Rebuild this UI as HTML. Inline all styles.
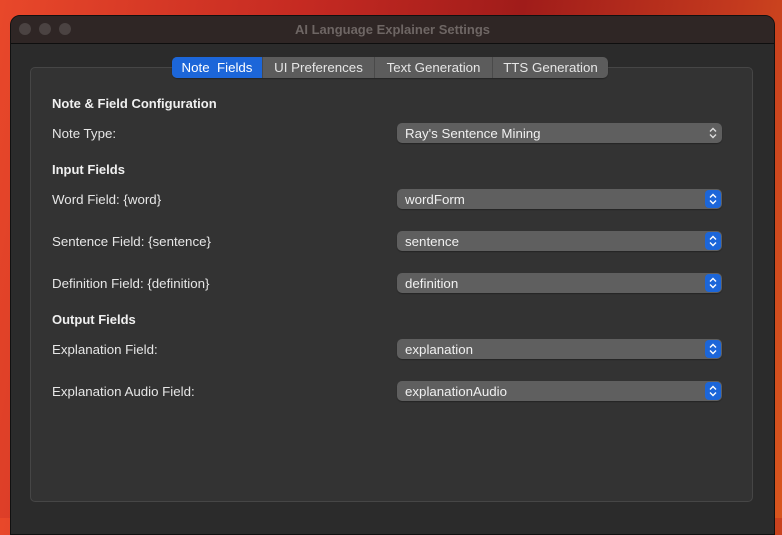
<!DOCTYPE html>
<html><head><style>
*{margin:0;padding:0;box-sizing:border-box}
body{width:782px;height:518px;overflow:hidden;position:relative;font-family:"Liberation Sans",sans-serif;
background:linear-gradient(100deg,#e8482a 0%,#c52a22 35%,#a01c1a 60%,#c43a1e 85%,#d8561e 100%)}
.win{position:absolute;left:10px;top:15px;width:765px;height:520px;background:#2b2b2b;border-radius:10px 10px 0 0;border:1px solid #111;overflow:hidden}
.tb{height:28px;background:#2f2625;border-bottom:1px solid #0e0e0e;position:relative}
.dot{position:absolute;top:7px;width:12px;height:12px;border-radius:50%;background:#4b4342}
.title{position:absolute;left:0;right:0;top:6px;text-align:center;color:#6e6664;font-weight:bold;font-size:13px}
.group{position:absolute;left:30px;top:67px;width:723px;height:435px;background:#333;border:1px solid #464646;border-radius:5px}
.tabs{position:absolute;left:172px;top:57px;height:21px;display:flex;border-radius:5px;overflow:hidden;background:#5c5c5c;box-shadow:0 1px 1px rgba(0,0,0,.3)}
.tab{color:#e6e6e6;font-size:13.3px;line-height:21px;text-align:center;border-right:1px solid #4a4a4a}
.tab.on{background:#1c66d9;color:#fff}
.h{position:absolute;left:52px;color:#f0f0f0;font-weight:bold;font-size:13px}
.l{position:absolute;left:52px;color:#e6e6e6;font-size:13.3px}
.pop{position:absolute;left:397px;width:325px;height:20px;background:#5f5f5f;border-radius:5px;color:#f0f0f0;font-size:13.3px;line-height:21px;padding-left:8px;box-shadow:0 1px 1px rgba(0,0,0,.3)}
.ar{position:absolute;right:1px;top:1px;width:16px;height:18px;border-radius:4px}
.ar.b{background:#1c66d9}
.ar svg{position:absolute;left:4px;top:3px}
</style></head><body>
<div class="win">
<div class="tb"><div class="dot" style="left:8px"></div><div class="dot" style="left:28px"></div><div class="dot" style="left:48px"></div>
<div class="title">AI Language Explainer Settings</div></div>
</div>
<div class="group"></div>
<div class="tabs">
<div class="tab on" style="width:91px">Note&nbsp; Fields</div>
<div class="tab" style="width:112px">UI Preferences</div>
<div class="tab" style="width:118px">Text Generation</div>
<div class="tab" style="width:115px;border:none">TTS Generation</div>
</div>
<div class="h" style="top:96px">Note &amp; Field Configuration</div>
<div class="l" style="top:126px">Note Type:</div>
<div class="pop" style="top:123px">Ray's Sentence Mining<div class="ar"><svg width="8" height="12"><path d="M1 4.5L4 1.5L7 4.5M1 7.5L4 10.5L7 7.5" stroke="#ddd" stroke-width="1.4" fill="none"/></svg></div></div>
<div class="h" style="top:162px">Input Fields</div>
<div class="l" style="top:192px">Word Field: {word}</div>
<div class="pop" style="top:189px">wordForm<div class="ar b"><svg width="8" height="12"><path d="M1 4.5L4 1.5L7 4.5M1 7.5L4 10.5L7 7.5" stroke="#fff" stroke-width="1.4" fill="none"/></svg></div></div>
<div class="l" style="top:234px">Sentence Field: {sentence}</div>
<div class="pop" style="top:231px">sentence<div class="ar b"><svg width="8" height="12"><path d="M1 4.5L4 1.5L7 4.5M1 7.5L4 10.5L7 7.5" stroke="#fff" stroke-width="1.4" fill="none"/></svg></div></div>
<div class="l" style="top:276px">Definition Field: {definition}</div>
<div class="pop" style="top:273px">definition<div class="ar b"><svg width="8" height="12"><path d="M1 4.5L4 1.5L7 4.5M1 7.5L4 10.5L7 7.5" stroke="#fff" stroke-width="1.4" fill="none"/></svg></div></div>
<div class="h" style="top:312px">Output Fields</div>
<div class="l" style="top:342px">Explanation Field:</div>
<div class="pop" style="top:339px">explanation<div class="ar b"><svg width="8" height="12"><path d="M1 4.5L4 1.5L7 4.5M1 7.5L4 10.5L7 7.5" stroke="#fff" stroke-width="1.4" fill="none"/></svg></div></div>
<div class="l" style="top:384px">Explanation Audio Field:</div>
<div class="pop" style="top:381px">explanationAudio<div class="ar b"><svg width="8" height="12"><path d="M1 4.5L4 1.5L7 4.5M1 7.5L4 10.5L7 7.5" stroke="#fff" stroke-width="1.4" fill="none"/></svg></div></div>
</body></html>
